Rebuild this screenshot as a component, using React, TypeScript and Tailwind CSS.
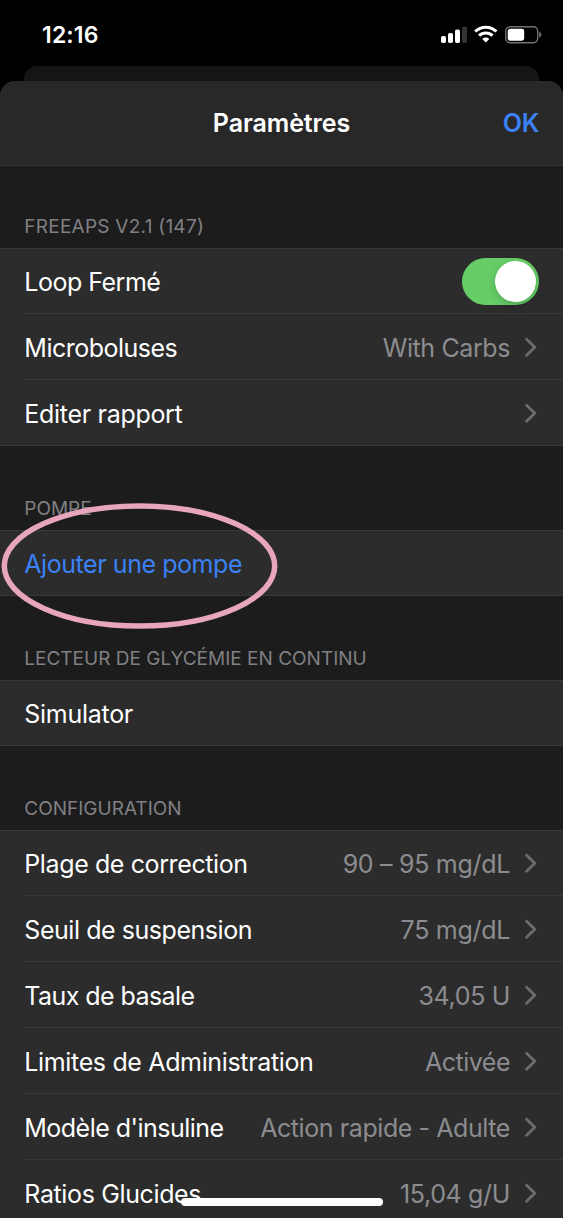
import React from "react";

type Row = { label: string; value?: string; labelClass?: string; valueClass?: string; toggle?: boolean; link?: boolean; chevron?: boolean };

function Chevron() {
  return (
    <svg width="12" height="20" viewBox="0 0 12 20" fill="none" className="mr-[2px] ml-[15px] shrink-0">
      <path d="M1.6 2.2 L9.8 10.2 L1.6 18.2" stroke="#6c6c6f" strokeWidth="2.8" strokeLinecap="round" strokeLinejoin="round" />
    </svg>
  );
}

function Toggle() {
  return (
    <div className="mt-[2px] flex h-[47px] w-[77px] shrink-0 items-center justify-end rounded-full bg-[#67ce67] pr-[3px]">
      <div className="size-[41px] rounded-full bg-white shadow-[0_3px_8px_rgba(0,0,0,0.2)]" />
    </div>
  );
}

function Item({ row, last }: { row: Row; last: boolean }) {
  return (
    <div className={last ? "h-[66px] border-b border-[#3a3a3c]" : "h-[66px] pl-6"}>
      <div className={last ? "flex h-full items-center pr-6 pl-6" : "flex h-full items-center border-b border-[#3a3a3c] pr-6"}>
        <span className={`pt-[2px] pl-[0.3px] whitespace-nowrap ${row.link ? "text-[#3b82f6]" : "text-white"} ${row.labelClass ?? ""}`}>{row.label}</span>
        <span className="flex-1" />
        {row.value && <span className={`pt-[2px] whitespace-nowrap text-[#8c8c90] ${row.valueClass ?? ""}`}>{row.value}</span>}
        {row.toggle ? <Toggle /> : row.chevron !== false && <Chevron />}
      </div>
    </div>
  );
}

function Section({ title, titleClass, rows, header }: { title: string; titleClass?: string; rows: Row[]; header: string }) {
  return (
    <section>
      <div className={`flex items-end pb-[9px] pl-[24.3px] ${header}`}>
        <h2 className={`text-[19px] leading-[24px] font-normal whitespace-nowrap text-[#808084] ${titleClass ?? ""}`}>{title}</h2>
      </div>
      <div className="relative bg-[#2c2c2c] text-[25px] leading-[34px] before:absolute before:inset-x-0 before:top-0 before:h-px before:bg-[#3a3a3c]">
        {rows.map((r, i) => (
          <Item key={r.label} row={r} last={i === rows.length - 1} />
        ))}
      </div>
    </section>
  );
}

function StatusBar() {
  return (
    <div className="flex h-[66px] items-start justify-between pt-[18px] pr-[21px] pl-[42px]">
      <span className="text-[23px] leading-[34px] font-semibold tracking-[0.15px] text-white">12:16</span>
      <svg width="102" height="20" viewBox="0 0 102 20" className="mt-[6px]">
        <g fill="#fff">
          <rect x="1" y="12" width="5" height="7" rx="1.8" />
          <rect x="8" y="9" width="5" height="10" rx="1.8" />
          <rect x="15" y="5.5" width="5" height="13.5" rx="1.8" />
          <rect x="22" y="2.5" width="5" height="16.5" rx="1.8" fill="#333" />
        </g>
        <g fill="none" stroke="#fff" strokeWidth="3.1">
          <path d="M35.2 7.5 A15.2 15.2 0 0 1 56.4 7.5" />
          <path d="M39.1 11.7 A9.5 9.5 0 0 1 52.5 11.7" />
        </g>
        <path d="M42.3 15 A5 5 0 0 1 49.3 15 L45.8 18.6 Z" fill="#fff" />
        <rect x="65.7" y="2.7" width="32" height="16" rx="4.4" fill="none" stroke="#717171" strokeWidth="1.4" />
        <rect x="67.7" y="4.7" width="16.5" height="12" rx="2.4" fill="#fff" />
        <path d="M99.3 7.6 Q103.4 10.7 99.3 13.8 Z" fill="#777" />
      </svg>
    </div>
  );
}

export default function App() {
  return (
    <div className="relative h-[1218px] w-[563px] overflow-hidden bg-black font-['Inter',sans-serif]">
      <StatusBar />
      <div className="mx-6 h-[15px] rounded-t-[13px] bg-[#151515]" />
      <div className="overflow-hidden rounded-t-[15px] bg-[#1c1c1c]">
        <header className="grid h-[85px] grid-cols-3 items-center border-b border-[#333] bg-[#282828] px-6 pt-[2px] text-[25px]">
          <span />
          <h1 className="text-center font-semibold tracking-[-0.1px] text-white">Paramètres</h1>
          <span className="text-right font-semibold tracking-[-0.3px] text-[#3b82f6]">OK</span>
        </header>
        <Section
          title="FREEAPS V2.1 (147)"
          titleClass="tracking-[0.25px]"
          header="h-[82px]"
          rows={[
            { label: "Loop Fermé", labelClass: "tracking-[-0.5px]", toggle: true },
            { label: "Microboluses", labelClass: "tracking-[-0.5px]", value: "With Carbs", valueClass: "tracking-[-0.4px]" },
            { label: "Editer rapport", labelClass: "tracking-[-0.3px]" },
          ]}
        />
        <Section
          title="POMPE"
          header="h-[84px]"
          rows={[{ label: "Ajouter une pompe", labelClass: "tracking-[-0.44px]", link: true, chevron: false }]}
        />
        <Section
          title="LECTEUR DE GLYCÉMIE EN CONTINU"
          header="h-[84px]"
          rows={[{ label: "Simulator", labelClass: "tracking-[-0.28px]", chevron: false }]}
        />
        <Section
          title="CONFIGURATION"
          header="h-[84px]"
          rows={[
            { label: "Plage de correction", labelClass: "tracking-[-0.39px]", value: "90 – 95 mg/dL", valueClass: "tracking-[-0.3px]" },
            { label: "Seuil de suspension", labelClass: "tracking-[-0.45px]", value: "75 mg/dL", valueClass: "tracking-[-0.3px]" },
            { label: "Taux de basale", labelClass: "tracking-[-0.57px]", value: "34,05 U", valueClass: "tracking-[-0.35px]" },
            { label: "Limites de Administration", labelClass: "tracking-[-0.35px]", value: "Activée", valueClass: "tracking-[-0.5px]" },
            { label: "Modèle d'insuline", labelClass: "tracking-[-0.53px]", value: "Action rapide - Adulte", valueClass: "tracking-[-0.42px]" },
            { label: "Ratios Glucides", labelClass: "tracking-[-0.37px]", value: "15,04 g/U", valueClass: "tracking-[-0.35px]" },
          ]}
        />
      </div>
      <svg width="280" height="130" viewBox="0 0 280 130" className="absolute top-[501px] left-0">
        <ellipse cx="139.5" cy="65" rx="135.2" ry="60" fill="none" stroke="#e8a5be" strokeWidth="5.5" />
      </svg>
      <div className="absolute top-[1198px] left-[181px] h-[8px] w-[202px] rounded-full bg-white" />
    </div>
  );
}
